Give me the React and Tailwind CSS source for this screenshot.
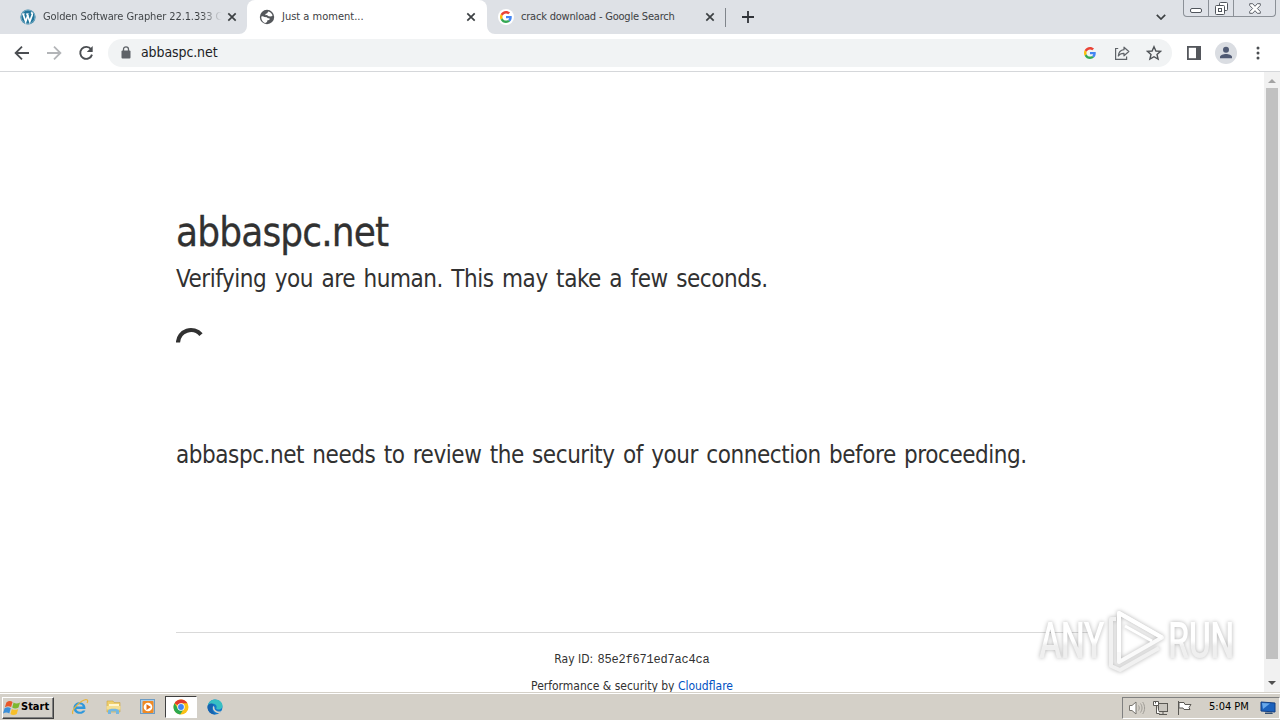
import React from "react";

const GoogleG = ({ className }) => (
  <svg viewBox="0 0 48 48" className={className}>
    <path fill="#EA4335" d="M24 9.5c3.54 0 6.71 1.22 9.21 3.6l6.85-6.85C35.9 2.38 30.47 0 24 0 14.62 0 6.51 5.38 2.56 13.22l7.98 6.19C12.43 13.72 17.74 9.5 24 9.5z" />
    <path fill="#4285F4" d="M46.98 24.55c0-1.57-.15-3.09-.38-4.55H24v9.02h12.94c-.58 2.96-2.26 5.48-4.78 7.18l7.73 6c4.51-4.18 7.09-10.36 7.09-17.65z" />
    <path fill="#FBBC05" d="M10.53 28.59c-.48-1.45-.76-2.99-.76-4.59s.27-3.14.76-4.59l-7.98-6.19C.92 16.46 0 20.12 0 24c0 3.88.92 7.54 2.56 10.78l7.97-6.19z" />
    <path fill="#34A853" d="M24 48c6.48 0 11.93-2.13 15.89-5.81l-7.73-6c-2.15 1.45-4.92 2.3-8.16 2.3-6.26 0-11.57-4.22-13.47-9.91l-7.98 6.19C6.51 42.62 14.62 48 24 48z" />
  </svg>
);

const WordPressIcon = () => (
  <svg viewBox="0 0 16 16" className="size-4 shrink-0">
    <circle cx="8" cy="8" r="7.6" fill="#21759b" />
    <circle cx="8" cy="8" r="6.9" fill="none" stroke="#cfe2ec" strokeWidth="0.5" />
    <g fill="none" stroke="#fff" strokeWidth="1.7">
      <path d="M3 4.8l2.7 7.8L8 6" />
      <path d="M7 4.8l2.8 7.8 2.4-6.6c.4-1.3-.4-2-.9-2.7" />
    </g>
    <path d="M2.1 4.9h3M6 4.9h3.2" stroke="#fff" strokeWidth="0.8" />
  </svg>
);

const GlobeIcon = () => (
  <svg viewBox="0 0 16 16" className="size-4 shrink-0">
    <circle cx="8" cy="8" r="7.2" fill="#54575b" />
    <path d="M2.3 7.4l1.5-.2 1.7.9 2.3.1 1.1 1.1 1.7-.1-.2 1.7-1.9.4-.5 1.7-1.7.9c-2.4-.7-4.3-3.1-4-6.500z" fill="#fff" />
    <path d="M9.2 2.4c2.2.6 3.9 2 4.4 4.2l-1.5 1-2.5-.4-1.7-1.1-1.4.2-.1-1.3 1.8-.7z" fill="#fff" />
  </svg>
);

const CloseIcon = () => (
  <svg viewBox="0 0 10 10" className="size-[10px] shrink-0">
    <path d="M1.3 1.3l7.4 7.4M8.7 1.3L1.3 8.7" stroke="#3c4043" strokeWidth="1.7" />
  </svg>
);

const TabStrip = () => (
  <div className="flex h-[34px] bg-[#dee1e6] text-[11px] text-[#3c4043]">
    <div className="flex w-[247px] items-center pl-5 pr-[10px]">
      <WordPressIcon />
      <span className="ml-[7px] whitespace-nowrap bg-gradient-to-r from-[#3c4043] from-88% to-transparent to-100% bg-clip-text tracking-[-0.1px] text-transparent">
        Golden Software Grapher 22.1.333 C
      </span>
      <span className="ml-auto flex">
        <CloseIcon />
      </span>
    </div>
    <div className="relative flex w-[240px] items-center rounded-t-lg bg-white pl-3 pr-[11px]">
      <svg viewBox="0 0 8 8" className="absolute -left-2 bottom-0 size-2">
        <path d="M8 0v8H0a8 8 0 008-8z" fill="#fff" />
      </svg>
      <svg viewBox="0 0 8 8" className="absolute -right-2 bottom-0 size-2">
        <path d="M0 0v8h8a8 8 0 01-8-8z" fill="#fff" />
      </svg>
      <GlobeIcon />
      <span className="ml-[7px] whitespace-nowrap">Just a moment...</span>
      <span className="ml-auto flex">
        <CloseIcon />
      </span>
    </div>
    <div className="flex w-[238px] items-center pl-[11px] pr-[10px]">
      <span className="flex size-4 items-center justify-center rounded-full bg-white">
        <GoogleG className="size-3" />
      </span>
      <span className="ml-[7px] whitespace-nowrap tracking-[-0.2px]">crack download - Google Search</span>
      <span className="ml-auto flex">
        <CloseIcon />
      </span>
    </div>
    <div className="mt-2 h-[19px] w-px bg-[#80858b]" />
    <svg viewBox="0 0 12 12" className="ml-4 mt-[11px] size-3">
      <path d="M6 0v12M0 6h12" stroke="#303338" strokeWidth="1.8" />
    </svg>
    <div className="ml-auto flex">
      <svg viewBox="0 0 10 6" className="mr-[17px] mt-[14px] h-[6px] w-[10px]">
        <path d="M.8.8L5 5 9.2.8" fill="none" stroke="#3c4043" strokeWidth="1.7" />
      </svg>
      <div className="mr-1 flex h-[17px] w-[93px] rounded-b-[4px] border border-t-0 border-[#8b9097] bg-[#dfe2e8]">
        <div className="flex w-[25px] items-end justify-center border-r border-[#8b9097] pb-[3px]">
          <div className="h-[5px] w-3 rounded-[2px] border border-[#50555c] bg-white" />
        </div>
        <div className="flex w-[25px] justify-center border-r border-[#8b9097] pt-[2px]">
          <svg viewBox="0 0 13 13" className="size-[13px]" fill="#fff" stroke="#50555c">
            <rect x="4.5" y=".5" width="8" height="8" rx="1" />
            <rect x=".5" y="3.5" width="9" height="9" rx="1" />
            <rect x="3.5" y="6.5" width="3" height="3" />
          </svg>
        </div>
        <div className="flex flex-1 justify-center pt-[3px]">
          <svg viewBox="0 0 12 11" className="h-[11px] w-3">
            <path d="M.7.7h3L6 3.3 8.3.7h3v1.8L8.4 5.5l2.9 3v1.8h-3L6 7.7l-2.3 2.6h-3V8.5l2.9-3-2.9-3z" fill="#fff" stroke="#50555c" strokeWidth=".9" />
          </svg>
        </div>
      </div>
    </div>
  </div>
);

const Toolbar = () => (
  <div className="flex h-[38px] items-center border-b border-[#d5d7da] bg-white pl-[14px] pr-5">
    <svg viewBox="0 0 16 16" className="size-4" fill="none" stroke="#4b4e52" strokeWidth="1.8">
      <path d="M15 8H2M8 1.6L1.6 8 8 14.4" />
    </svg>
    <svg viewBox="0 0 16 16" className="ml-4 size-4" fill="none" stroke="#b3b5b8" strokeWidth="1.8">
      <path d="M1 8h13M8 1.6L14.4 8 8 14.4" />
    </svg>
    <svg viewBox="0 0 16 16" className="ml-4 size-4">
      <path d="M13.1 4.3A6 6 0 1014 9.6" fill="none" stroke="#4b4e52" strokeWidth="1.9" />
      <path d="M14.7 1v6H8.8z" fill="#4b4e52" />
    </svg>
    <div className="ml-[14px] flex h-7 w-[1064px] items-center rounded-full bg-[#f1f3f4] pl-[13px] pr-[10px]">
      <svg viewBox="0 0 10 13" className="h-[13px] w-[10px]">
        <rect x=".5" y="4.5" width="9" height="8" rx="1" fill="#5f6368" />
        <path d="M2.5 5V3.3a2.5 2.5 0 015 0V5" fill="none" stroke="#5f6368" strokeWidth="1.3" />
      </svg>
      <span className="ml-[10px] text-[14px] tracking-[-0.1px] text-[#202124]">abbaspc.net</span>
      <GoogleG className="ml-auto size-3" />
      <svg viewBox="0 0 16 16" className="ml-[18px] size-4" fill="none" stroke="#5f6368" strokeWidth="1.2">
        <path d="M4.2 3.5H1.6v10.9h11v-3" />
        <path d="M10 2.2l4.8 4.3L10 10.8V8.4C7.3 8.3 5.6 9.1 4.3 11c.3-3.600 2.400-5.900 5.700-6.300z" strokeLinejoin="round" />
      </svg>
      <svg viewBox="0 0 16 16" className="ml-4 size-4">
        <path d="M8 1.7l1.9 4.3 4.7.4-3.6 3.1 1.1 4.600L8 11.700l-4.100 2.400L5 9.500 1.400 6.400 6.100 6z" fill="none" stroke="#4f5357" strokeWidth="1.4" />
      </svg>
    </div>
    <svg viewBox="0 0 14 14" className="ml-[15px] size-[14px]">
      <rect x=".9" y=".9" width="12.2" height="12.2" fill="none" stroke="#54575c" strokeWidth="1.8" />
      <path d="M9 1h4.5v12H9z" fill="#54575c" />
    </svg>
    <svg viewBox="0 0 22 22" className="ml-[14px] size-[22px]">
      <circle cx="11" cy="11" r="11" fill="#dadde2" />
      <circle cx="11" cy="7.8" r="3" fill="#505a73" />
      <path d="M5 16.3v-1.3c0-2 3.5-3 6-3s6 1 6 3v1.3z" fill="#505a73" />
    </svg>
    <svg viewBox="0 0 4 14" className="ml-auto h-[14px] w-1" fill="#4b4e52">
      <circle cx="2" cy="2" r="1.5" />
      <circle cx="2" cy="7" r="1.5" />
      <circle cx="2" cy="12" r="1.5" />
    </svg>
  </div>
);

const Watermark = () => (
  <div className="absolute left-[1039px] top-[536px] flex h-[66px] items-center drop-shadow-[0_0_2px_rgba(0,0,0,0.3)]">
    <span className="-mr-[34px] w-[100px] origin-left scale-x-[0.68] bg-gradient-to-b from-white from-50% to-[#efefef] to-60% bg-clip-text font-[Roboto] text-[50px] font-medium leading-none tracking-[-1px] text-transparent">
      ANY
    </span>
    <svg viewBox="0 0 60 66" className="h-[66px] w-[60px] shrink-0" fill="none" strokeWidth="4" strokeLinejoin="round">
      <path d="M54 40L15 62l-9-4V11h5" stroke="#f1f1f1" />
      <path d="M14 54V5l43 24.5L14 54z" stroke="#fafafa" />
      <path d="M14 44V5l43 24.500" stroke="#fff" />
      <path d="M20 18l27 15" stroke="#fff" strokeWidth="3" />
    </svg>
    <span className="ml-[3px] w-[100px] origin-left scale-x-[0.68] bg-gradient-to-b from-white from-50% to-[#efefef] to-60% bg-clip-text font-[Roboto] text-[50px] font-medium leading-none tracking-[-1px] text-transparent">
      RUN
    </span>
  </div>
);

const Page = () => (
  <div className="relative flex h-[620px] overflow-hidden bg-white text-[#313131]">
    <main className="flex flex-1 flex-col px-[176px]">
      <h1 className="mt-[130px] h-[60px] shrink-0 whitespace-nowrap text-[40px] leading-[60px] tracking-[-0.85px] [-webkit-text-stroke:0.3px_#313131]">
        abbaspc.net
      </h1>
      <h2 className="h-9 shrink-0 whitespace-nowrap text-[24px] leading-[34px] tracking-[-0.45px] [word-spacing:2px]">
        Verifying you are human. This may take a few seconds.
      </h2>
      <svg viewBox="0 0 30 30" className="mt-[29px] size-[30px] shrink-0">
        <path d="M2 15.500A13 13 0 0125 7.700" fill="none" stroke="#313131" strokeWidth="4.2" />
      </svg>
      <p className="mt-20 h-9 shrink-0 whitespace-nowrap text-[24px] leading-9 tracking-[-0.45px] [word-spacing:1.9px]">
        abbaspc.net needs to review the security of your connection before proceeding.
      </p>
      <footer className="mt-[159px] border-t border-[#d9d9d9] pt-[17px] text-center text-[12px] leading-[18px]">
        <div>
          Ray ID: <code className="ml-px font-['Liberation_Mono'] text-[12px] tracking-[-0.2px]">85e2f671ed7ac4ca</code>
        </div>
        <div className="mt-[8px]">
          Performance &amp; security by <span className="text-[#0051c3]">Cloudflare</span>
        </div>
      </footer>
    </main>
    <div className="flex w-4 flex-col items-center bg-[#f1f1f1]">
      <svg viewBox="0 0 16 16" className="size-4">
        <path d="M4 11l4-4 4 4z" fill="#a3a3a3" />
      </svg>
      <div className="h-[571px] w-3 bg-[#c1c1c1]" />
      <svg viewBox="0 0 16 16" className="mt-auto size-4">
        <path d="M4 5h8l-4 4z" fill="#505050" />
      </svg>
    </div>
    <Watermark />
  </div>
);

const Taskbar = () => (
  <div className="flex h-7 items-center border-t border-[#d4d0c8] bg-[#d4d0c8] shadow-[inset_0_1px_0_#fff]">
    <div className="ml-[2px] mt-[2px] flex h-[22px] w-[52px] items-center border border-b-[#404040] border-l-white border-r-[#404040] border-t-white text-[11px] font-bold text-black shadow-[inset_-1px_-1px_0_#808080]">
      <svg viewBox="1 1 16 14" className="h-4 w-[18px]">
        <path d="M4 3c2-1.5 4-1.5 5.5-.3L8.200 7.200C6.500 6 4.600 6.200 2.700 7.300z" fill="#e8572a" />
        <path d="M10.4 3.2c1.8 1.2 3.8 1 5.8-.2l-1.4 4.600c-2 1.200-4 1.100-5.600 0z" fill="#7db72f" />
        <path d="M2.4 8.3c2-1.2 3.9-1.2 5.5 0l-1.300 4.500c-1.700-1.200-3.600-1.200-5.600 0z" fill="#3c8fd9" />
        <path d="M8.9 8.8c1.8 1.2 3.7 1.1 5.6 0l-1.300 4.500c-2 1.200-4 1.200-5.600 0z" fill="#f7bf2a" />
      </svg>
      Start
    </div>
    <svg viewBox="0 0 18 18" className="ml-[17px] size-[18px]">
      <path d="M14.5 11H5.400c.3 3 4.700 3.400 6.500 1.400h2.500C12 18 2.400 16.600 2.500 9.800 2.700 2.300 15 1.900 14.500 11zM5.400 8.600h6.300c-.5-3-5.600-3.100-6.300 0z" fill="#2f98dc" />
      <path d="M2 16C-.5 12.500 9 2.500 15 1.500c2.500 0 1.700 2.500 1 3.500" fill="none" stroke="#e8b43a" strokeWidth="1.2" />
    </svg>
    <svg viewBox="0 0 18 18" className="ml-4 size-[18px]">
      <path d="M2 3h6l1 1.500h6V14H2z" fill="#efcf6c" stroke="#c9a445" strokeWidth=".6" />
      <path d="M4 6h10v3H4z" fill="#fff6cf" />
      <path d="M1.500 8h14v3.500h-14z" fill="#f5df91" />
      <path d="M3 16v-3.500c0-2.500 11-2.500 11 0V16h-3v-2.500H6V16z" fill="#74b7e2" />
    </svg>
    <svg viewBox="0 0 18 18" className="ml-4 size-[18px]">
      <rect x="1.500" y="1.500" width="14" height="14" fill="#a9cdea" stroke="#6b9cc5" />
      <rect x="3.500" y="3" width="11" height="12" rx="1" fill="#f08a24" />
      <circle cx="9" cy="9" r="4.300" fill="#fff" />
      <path d="M7.500 6.200l4.500 2.900-4.500 2.900z" fill="#e46b12" />
    </svg>
    <div className="ml-[8px] mt-px flex h-[22px] w-8 items-center justify-center border border-b-white border-l-[#404040] border-r-white border-t-[#404040] bg-white">
      <svg viewBox="0 0 16 16" className="size-4">
        <circle cx="8" cy="8" r="7.500" fill="#fbc116" />
        <path d="M8 8L1.500 4.200A7.500 7.500 0 0114.500 4.300H8z" fill="#e33b2e" />
        <path d="M1.500 4.250A7.500 7.500 0 007.200 15.500L11 9.500 8 8 5 9.500z" fill="#2da94f" />
        <circle cx="8" cy="8" r="3.700" fill="#fff" />
        <circle cx="8" cy="8" r="2.900" fill="#4285f4" />
      </svg>
    </div>
    <svg viewBox="0 0 16 16" className="ml-[10px] size-4">
      <circle cx="8" cy="8" r="7.500" fill="#1479c9" />
      <path d="M.7 7C1.500 2.500 5 .5 8 .5c4.500 0 7.500 3 7.500 6.200 0 3-2.500 3.900-4.500 3.900-1.500 0-2-.8-1.600-1.500C11 5.500 5 2.800.7 7z" fill="#37bfc3" />
      <path d="M6.200 7c-1.500 3.500 1.500 7 5.800 7.200 1.200-.4 2-1.100 2.600-2-4 1-7.500-.7-7.200-4.200z" fill="#d4d0c8" />
      <path d="M.5 8c0-3.300 4-4.500 6.300-2.200C4.500 7 4.200 12.500 8.500 15.500 4 15.700.5 12.500.5 8z" fill="#1762ae" />
    </svg>
    <div className="ml-auto mt-[2px] flex h-[22px] w-[158px] items-center border border-b-white border-l-[#808080] border-r-white border-t-[#808080] pl-[5px] text-[11px] text-black">
      <svg viewBox="0 0 18 16" className="h-4 w-[18px]" fill="none" stroke="#77746e">
        <path d="M1.500 5.500H4L8 2v12l-4-3.500H1.500z" fill="#fff" />
        <path d="M10.500 5.500c1 1.500 1 3.500 0 5M12.500 3.500c2 3 2 6 0 9M14.700 2c2.500 4 2.500 8 0 12" stroke="#a09d97" />
      </svg>
      <svg viewBox="0 0 18 16" className="ml-[6px] h-4 w-[18px]" fill="#fff" stroke="#5b5954">
        <rect x="6.500" y="3.500" width="9" height="8" fill="#c9c6bf" />
        <path d="M7 14.500h8M11 12v2" />
        <path d="M1.500 1.500h5v4h-5zM3.500 1.500v2M4.500 6v7.500h3" />
      </svg>
      <svg viewBox="0 0 18 16" className="ml-[6px] h-4 w-[18px]" fill="#fff" stroke="#5b5954">
        <path d="M2.500 1v14" />
        <path d="M3 2.500h5l1 2h6l-2 3 1 2H8l-1-1.500H3z" />
      </svg>
      <span className="ml-[15px] whitespace-nowrap">5:04 PM</span>
      <svg viewBox="0 0 16 14" className="ml-auto mr-[3px] h-[14px] w-4">
        <path d="M1 1l14 1v9L1 10z" fill="#1c62bd" stroke="#123f83" />
        <path d="M2 2l8 .6L3 8z" fill="#68a8ea" />
        <path d="M5 11.500h7l1 1.500H5z" fill="#324f72" />
      </svg>
    </div>
  </div>
);

const App = () => {
  return (
    <div className="h-[720px] w-[1280px] overflow-hidden font-['DejaVu_Sans_Condensed','DejaVu_Sans',sans-serif]">
      <TabStrip />
      <Toolbar />
      <Page />
      <Taskbar />
    </div>
  );
};

export default App;
